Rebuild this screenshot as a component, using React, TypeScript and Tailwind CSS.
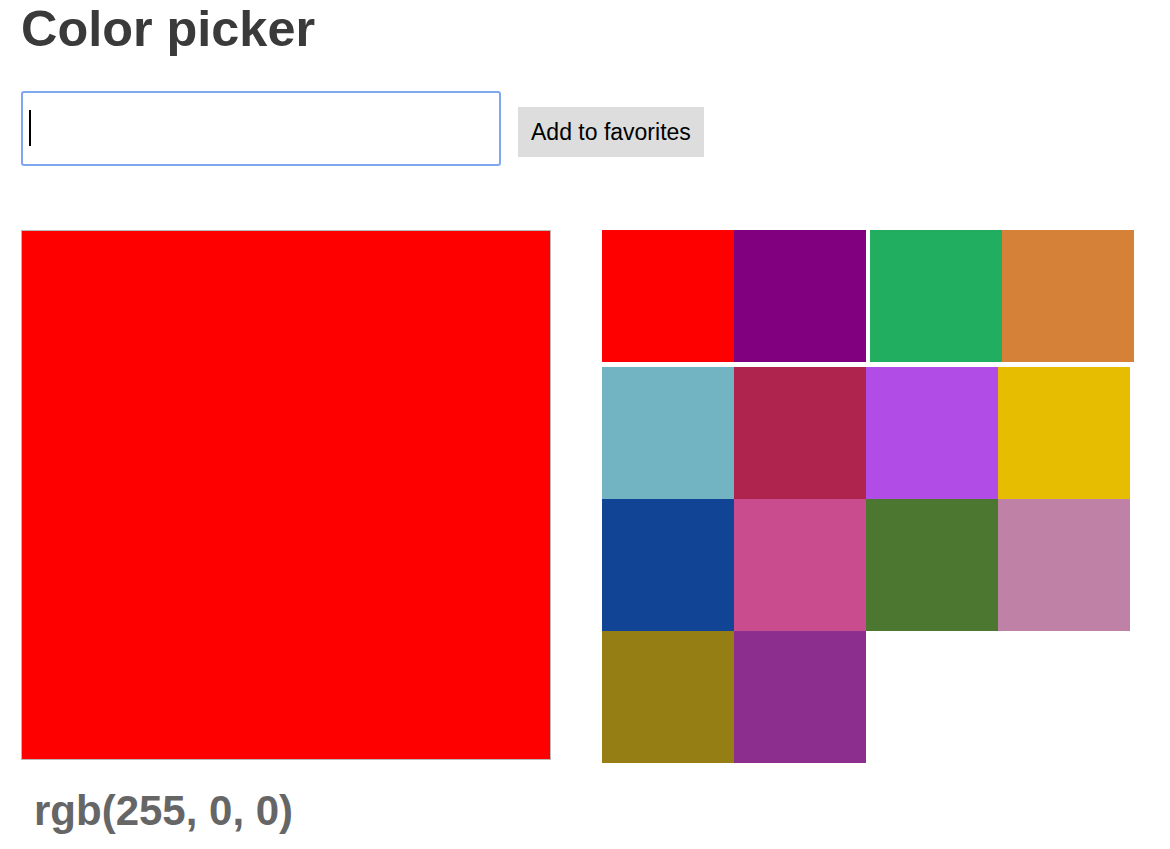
import React from "react";

const row1 = ["#ff0000", "#800080"];
const row1b = ["#22ae60", "#d58137"];
const rest = [
  "#72b4c2",
  "#ae244f",
  "#b14de6",
  "#e6bd00",
  "#124495",
  "#c94c8f",
  "#4b7730",
  "#c081a7",
  "#957f15",
  "#8c2e8d",
];

export default function App() {
  return (
    <div
      className="min-h-[849px] bg-white px-[21px]"
      style={{ fontFamily: '"Liberation Sans", Arial, sans-serif' }}
    >
      <h1 className="m-0 text-[50.4px] leading-[57px] font-bold text-[#3a3a3a]">
        Color picker
      </h1>
      <div className="mt-[34px] flex items-start">
        <div className="relative">
          <input
            type="text"
            className="block h-[75px] w-[480px] rounded-[3px] border-2 border-[#7fa7ee] bg-white text-[32px] outline-none"
          />
          <div className="pointer-events-none absolute left-[8px] top-[19px] h-[36px] w-[2px] bg-black" />
        </div>
        <button className="ml-[17px] mt-[16px] bg-[#dddddd] px-[13px] py-[12px] text-[23px] leading-[26px] text-black">
          Add to favorites
        </button>
      </div>
      <div className="mt-[64px] flex items-start">
        <div className="flex flex-col">
          <div className="h-[530px] w-[530px] border border-[#b8b8b8] bg-[#ff0000]" />
          <div className="mt-[27px] pl-[13px] text-[42px] leading-[48px] font-bold text-[#666666]">
            rgb(255, 0, 0)
          </div>
        </div>
        <div className="ml-[51px] flex w-[532px] flex-col">
          <div className="flex">
            {row1.map((c) => (
              <div key={c} className="h-[132px] w-[132px]" style={{ backgroundColor: c }} />
            ))}
            <div className="w-[4px]" />
            {row1b.map((c) => (
              <div key={c} className="h-[132px] w-[132px]" style={{ backgroundColor: c }} />
            ))}
          </div>
          <div className="mt-[5px] flex w-[528px] flex-wrap">
            {rest.map((c) => (
              <div key={c} className="h-[132px] w-[132px]" style={{ backgroundColor: c }} />
            ))}
          </div>
        </div>
      </div>
    </div>
  );
}
